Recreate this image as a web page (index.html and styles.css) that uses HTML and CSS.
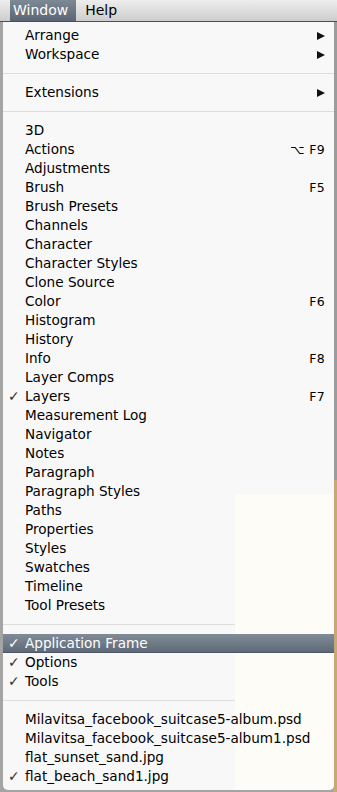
FILE: index.html
```html
<!DOCTYPE html>
<html>
<head lang="en">
  <meta charset="UTF-8">
  <title>Window</title>
  <link rel="stylesheet" href="styles.css">
</head>
<body>
<div class="menubar">
  <span class="menubar-item active">Window</span>
  <span class="menubar-item">Help</span>
</div>
<div class="menu">
  <div class="menu-tint"></div>
  <div class="menu-row"><span class="label">Arrange</span><span class="arrow"></span></div>
  <div class="menu-row"><span class="label">Workspace</span><span class="arrow"></span></div>
  <div class="menu-sep"></div>
  <div class="menu-row"><span class="label">Extensions</span><span class="arrow"></span></div>
  <div class="menu-sep"></div>
  <div class="menu-row"><span class="label">3D</span></div>
  <div class="menu-row"><span class="label">Actions</span><span class="key">⌥ F9</span></div>
  <div class="menu-row"><span class="label">Adjustments</span></div>
  <div class="menu-row"><span class="label">Brush</span><span class="key">F5</span></div>
  <div class="menu-row"><span class="label">Brush Presets</span></div>
  <div class="menu-row"><span class="label">Channels</span></div>
  <div class="menu-row"><span class="label">Character</span></div>
  <div class="menu-row"><span class="label">Character Styles</span></div>
  <div class="menu-row"><span class="label">Clone Source</span></div>
  <div class="menu-row"><span class="label">Color</span><span class="key">F6</span></div>
  <div class="menu-row"><span class="label">Histogram</span></div>
  <div class="menu-row"><span class="label">History</span></div>
  <div class="menu-row"><span class="label">Info</span><span class="key">F8</span></div>
  <div class="menu-row"><span class="label">Layer Comps</span></div>
  <div class="menu-row"><span class="check">✓</span><span class="label">Layers</span><span class="key">F7</span></div>
  <div class="menu-row"><span class="label">Measurement Log</span></div>
  <div class="menu-row"><span class="label">Navigator</span></div>
  <div class="menu-row"><span class="label">Notes</span></div>
  <div class="menu-row"><span class="label">Paragraph</span></div>
  <div class="menu-row"><span class="label">Paragraph Styles</span></div>
  <div class="menu-row"><span class="label">Paths</span></div>
  <div class="menu-row"><span class="label">Properties</span></div>
  <div class="menu-row"><span class="label">Styles</span></div>
  <div class="menu-row"><span class="label">Swatches</span></div>
  <div class="menu-row"><span class="label">Timeline</span></div>
  <div class="menu-row"><span class="label">Tool Presets</span></div>
  <div class="menu-sep"></div>
  <div class="menu-row selected"><span class="check">✓</span><span class="label">Application Frame</span></div>
  <div class="menu-row"><span class="check">✓</span><span class="label">Options</span></div>
  <div class="menu-row"><span class="check">✓</span><span class="label">Tools</span></div>
  <div class="menu-sep"></div>
  <div class="menu-row"><span class="label">Milavitsa_facebook_suitcase5-album.psd</span></div>
  <div class="menu-row"><span class="label">Milavitsa_facebook_suitcase5-album1.psd</span></div>
  <div class="menu-row"><span class="label">flat_sunset_sand.jpg</span></div>
  <div class="menu-row"><span class="check">✓</span><span class="label">flat_beach_sand1.jpg</span></div>
</div>
</body>
</html>
```
FILE: styles.css
```css
html, body {
  margin: 0;
  padding: 0;
}

body {
  width: 337px;
  height: 792px;
  overflow: hidden;
  font-family: "DejaVu Sans", "Liberation Sans", sans-serif;
  font-size: 13.6px;
  color: #000000;
  background: linear-gradient(to bottom, #9c9c9c 0px, #9c9c9c 480px, #c9a877 480px) no-repeat right top / 4px 100%, #a4a4a4;
}

.menubar {
  height: 21px;
  display: flex;
  padding-left: 10px;
  background: linear-gradient(to bottom, #eeeeee, #cdcdcd);
  border-bottom: 1px solid #4f4f4f;
}

.menubar-item {
  line-height: 21px;
  padding: 0 9px 0 4px;
  font-size: 14px;
}

.menubar-item.active {
  padding: 0 8px 0 3px;
  color: #ffffff;
  background: linear-gradient(to bottom, #7e8996, #5b6674);
}

.menubar-item + .menubar-item {
  padding-left: 9px;
}

.menu {
  position: relative;
  margin: 0 3px 0 3px;
  padding: 4px 0 4px 0;
  background: #f8f8f8;
  border-radius: 0 0 5px 5px;
}

.menu-tint {
  position: absolute;
  left: 232px;
  top: 472px;
  right: 0;
  bottom: 0;
  background: #fdfcf7;
  border-radius: 0 0 5px 0;
}

.menu-row {
  position: relative;
  height: 19px;
  line-height: 19px;
  display: flex;
  align-items: center;
  padding: 0 9px 0 22px;
}

.menu-row .label {
  flex: 1;
  white-space: nowrap;
}

.check {
  position: absolute;
  left: 5px;
  top: 0;
  font-size: 14px;
  color: #333333;
}

.key {
  font-size: 12.5px;
  letter-spacing: 0.3px;
}

.arrow {
  width: 0;
  height: 0;
  border-top: 4.5px solid transparent;
  border-bottom: 4.5px solid transparent;
  border-left: 8px solid #111111;
}

.menu-row.selected {
  color: #ffffff;
  background: linear-gradient(to bottom, #818c98, #5f6a78);
  border-bottom: 1px solid #4e5864;
  height: 18px;
  line-height: 18px;
}

.menu-row.selected .check {
  color: #ffffff;
}

.menu-sep {
  height: 19px;
  display: flex;
  align-items: center;
}

.menu-sep::after {
  content: "";
  display: block;
  width: 100%;
  height: 1px;
  background: #dddddd;
}
```
